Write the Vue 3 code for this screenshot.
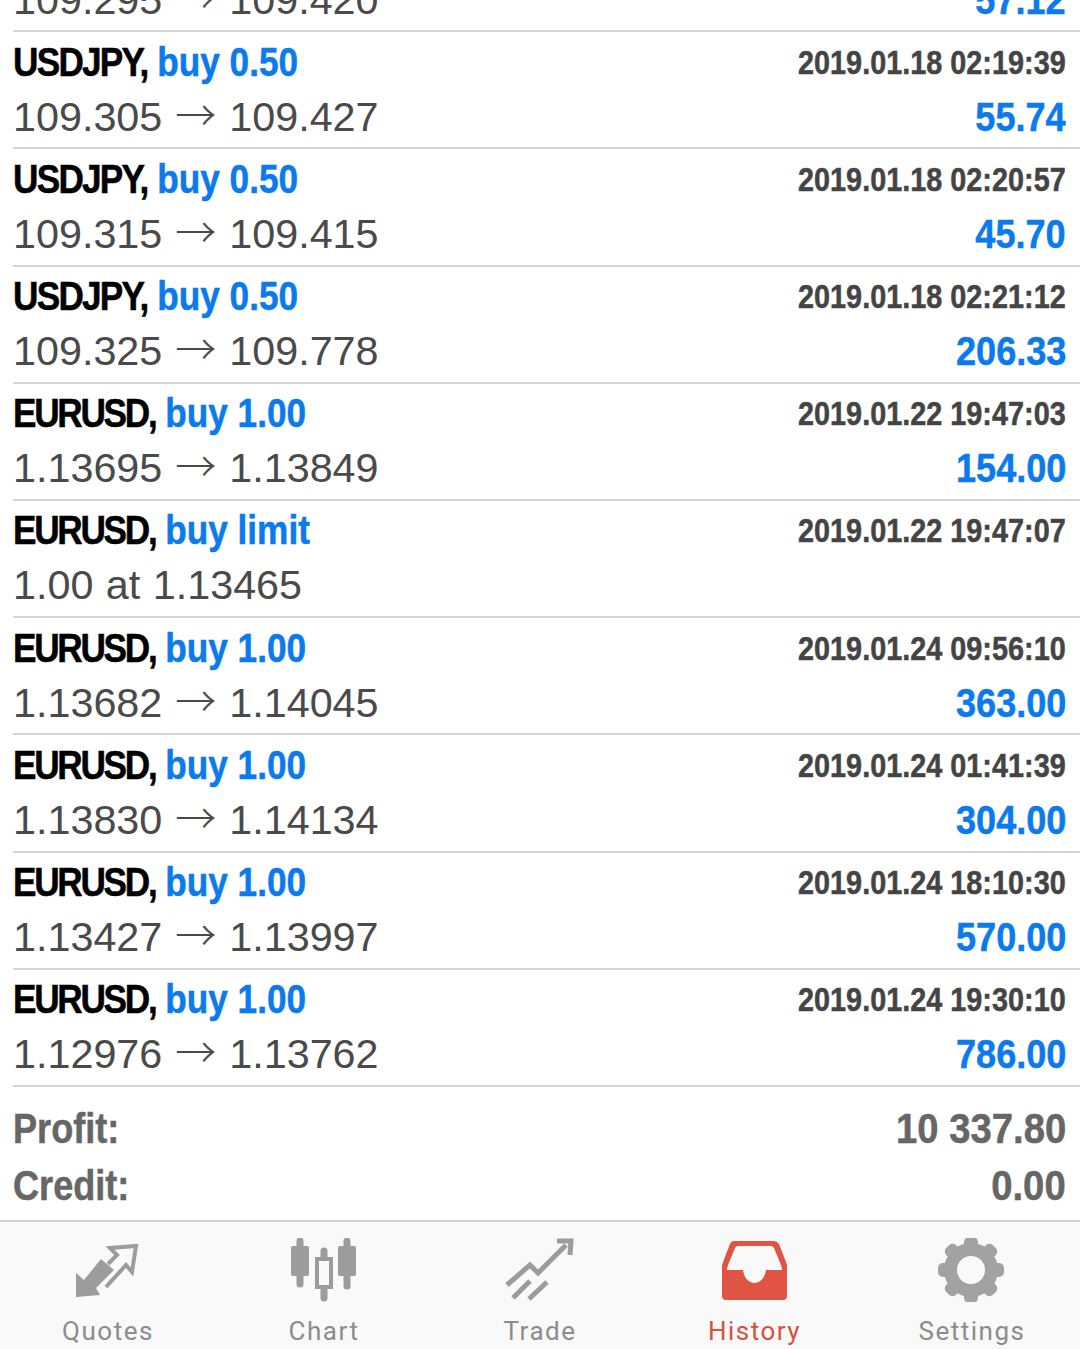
<script setup>
const deals = [
  { pair: 'USDJPY', type: 'buy 0.50', time: '2019.01.18 02:18:52', from: '109.295', to: '109.420', profit: '57.12' },
  { pair: 'USDJPY', type: 'buy 0.50', time: '2019.01.18 02:19:39', from: '109.305', to: '109.427', profit: '55.74' },
  { pair: 'USDJPY', type: 'buy 0.50', time: '2019.01.18 02:20:57', from: '109.315', to: '109.415', profit: '45.70' },
  { pair: 'USDJPY', type: 'buy 0.50', time: '2019.01.18 02:21:12', from: '109.325', to: '109.778', profit: '206.33' },
  { pair: 'EURUSD', type: 'buy 1.00', time: '2019.01.22 19:47:03', from: '1.13695', to: '1.13849', profit: '154.00' },
  { pair: 'EURUSD', type: 'buy limit', time: '2019.01.22 19:47:07', order: '1.00 at 1.13465' },
  { pair: 'EURUSD', type: 'buy 1.00', time: '2019.01.24 09:56:10', from: '1.13682', to: '1.14045', profit: '363.00' },
  { pair: 'EURUSD', type: 'buy 1.00', time: '2019.01.24 01:41:39', from: '1.13830', to: '1.14134', profit: '304.00' },
  { pair: 'EURUSD', type: 'buy 1.00', time: '2019.01.24 18:10:30', from: '1.13427', to: '1.13997', profit: '570.00' },
  { pair: 'EURUSD', type: 'buy 1.00', time: '2019.01.24 19:30:10', from: '1.12976', to: '1.13762', profit: '786.00' },
]

const teeth = [0, 45, 90, 135, 180, 225, 270, 315]
</script>

<template>
  <div class="screen">
    <div class="content">
      <ul class="deal-list">
        <li v-for="deal in deals" :key="deal.time" class="deal">
          <div class="deal-line first">
            <span class="deal-title"><span class="deal-pair" :class="{ tight: deal.pair === 'EURUSD' }">{{ deal.pair }},</span> <span class="deal-type">{{ deal.type }}</span></span>
            <span class="deal-time">{{ deal.time }}</span>
          </div>
          <div class="deal-line">
            <span v-if="deal.order" class="deal-prices">{{ deal.order }}</span>
            <span v-else class="deal-prices">{{ deal.from }}<span class="arrow">→</span>{{ deal.to }}</span>
            <span class="deal-profit">{{ deal.profit }}</span>
          </div>
        </li>
      </ul>
      <div class="summary">
        <div class="summary-row"><span class="summary-label">Profit:</span><span class="summary-value">10 337.80</span></div>
        <div class="summary-row"><span class="summary-label">Credit:</span><span class="summary-value">0.00</span></div>
      </div>
    </div>

    <nav class="tabbar">
      <div class="tab">
        <svg class="tab-icon" width="80" height="64" viewBox="0 0 80 64">
          <polygon class="fill" points="8,59 8,35 16,42 33,21 46,32 28,50 32,57" />
          <path class="line thin" d="M38 49 58 27 64 34 68 8 42 10 49 17 40 26" />
        </svg>
        <span class="tab-label">Quotes</span>
      </div>
      <div class="tab">
        <svg class="tab-icon" width="80" height="64" viewBox="0 0 80 64">
          <path class="wick" d="M16 3V46M63 3V48M40 13V60" />
          <rect class="fill" x="7" y="8" width="18" height="30" rx="2" />
          <rect class="fill" x="54" y="8" width="18" height="30" rx="2" />
          <rect class="hollow" x="33" y="21" width="14" height="28" />
        </svg>
        <span class="tab-label">Chart</span>
      </div>
      <div class="tab">
        <svg class="tab-icon" width="80" height="64" viewBox="0 0 80 64">
          <path class="line" d="M7 47 30 27 38 35 66 7" />
          <path class="line" d="M57 3 71 3 70 17" />
          <path class="line" d="M13 60 30 43M29 61 47 44" />
        </svg>
        <span class="tab-label">Trade</span>
      </div>
      <div class="tab active">
        <svg class="tab-icon" width="80" height="64" viewBox="0 0 80 64">
          <path class="tray" fill-rule="evenodd" d="M18 3H58Q61 3 63 6L70 24Q71 26 71 30V58Q71 62 67 62H10Q6 62 6 58V30Q6 26 7 24L14 6Q15 3 18 3ZM22 8Q20 8 19 10L12 27Q11 30 11 32H27C28 40 33 45 38.500 45S49 40 50 32H66Q66 30 65 27L58 10Q57 8 55 8Z" />
        </svg>
        <span class="tab-label history-label">History</span>
      </div>
      <div class="tab">
        <svg class="tab-icon" width="80" height="64" viewBox="0 0 80 64">
          <circle class="gear-ring" cx="39" cy="32" r="20.500" />
          <rect
            v-for="angle in teeth"
            :key="angle"
            class="gear-tooth"
            x="32"
            y="-1"
            width="14"
            height="12"
            rx="5"
            :transform="`rotate(${angle} 39 32)`"
          />
        </svg>
        <span class="tab-label">Settings</span>
      </div>
    </nav>
  </div>
</template>

<style scoped>
.screen {
  width: 1080px;
  height: 1349px;
  overflow: hidden;
  display: flex;
  flex-direction: column;
  background: #fff;
  font-family: "Liberation Sans", Arial, sans-serif;
}

.content {
  flex: 1;
  min-height: 0;
  padding-left: 13px;
}

.deal-list {
  list-style: none;
  margin: -85px 0 0;
  padding: 0;
}

.deal {
  height: 117.200px;
  box-sizing: border-box;
  border-bottom: 2px solid #d4d4d4;
  padding: 1.500px 14px 0 0;
}

.deal-line {
  display: flex;
  justify-content: space-between;
  align-items: baseline;
  height: 56px;
  line-height: 56px;
}

.deal-line.first {
  height: 55px;
}

/* no condensed face is installed, so the bold text is narrowed by hand */
.deal-title,
.deal-time,
.deal-profit,
.summary-row {
  font-weight: 700;
  -webkit-text-stroke: 0.5px currentColor;
}

.deal-title {
  font-size: 40px;
  color: #000;
  transform: scaleX(0.88);
  transform-origin: left center;
}

.deal-pair {
  letter-spacing: -2px;
}

.deal-pair.tight {
  letter-spacing: -2.600px;
}

.deal-type {
  color: #0a7aee;
}

.deal-time {
  font-size: 34px;
  color: #444;
  position: relative;
  top: -2px;
  transform: scaleX(0.848);
  transform-origin: right center;
}

.deal-prices {
  font-size: 41.300px;
  word-spacing: 1px;
  color: #4a4a4a;
}

.arrow {
  margin: 0 13px;
  font-family: "Noto Sans CJK JP", sans-serif;
  font-size: 41px;
  font-weight: 300;
  line-height: 0;
}

.deal-profit {
  font-size: 41px;
  color: #0a7aee;
  transform: scaleX(0.88);
  transform-origin: right center;
}

.summary {
  padding: 13px 14px 0 0;
}

.summary-row {
  display: flex;
  justify-content: space-between;
  align-items: baseline;
  height: 57px;
  line-height: 57px;
  font-size: 43px;
  color: #666;
}

.summary-label {
  transform: scaleX(0.84);
  transform-origin: left center;
}

.summary-value {
  transform: scaleX(0.89);
  transform-origin: right center;
}

.tabbar {
  height: 129px;
  box-sizing: border-box;
  flex-shrink: 0;
  display: grid;
  grid-template-columns: repeat(5, 216px);
  background: #f9f9f9;
  border-top: 2px solid #d2d2d2;
}

.tab {
  display: flex;
  flex-direction: column;
  align-items: center;
  padding-top: 16px;
  color: #8c8c8c;
}

.tab.active {
  color: #d9503f;
}

.tab-icon {
  display: block;
  flex-shrink: 0;
}

.tab-label {
  margin-top: 14px;
  font-family: Roboto, sans-serif;
  font-size: 26px;
  line-height: 30px;
  letter-spacing: 1.500px;
}

.history-label {
  margin-left: -3px;
}

.fill {
  fill: #9c9c9c;
}

.line {
  fill: none;
  stroke: #9c9c9c;
  stroke-width: 5;
}

.line.thin {
  stroke-width: 4;
}

.wick {
  fill: none;
  stroke: #9c9c9c;
  stroke-width: 7;
  stroke-linecap: round;
}

.hollow {
  fill: #f9f9f9;
  stroke: #9c9c9c;
  stroke-width: 4;
}

.tray {
  fill: #e05443;
}

.gear-ring {
  fill: none;
  stroke: #a2a2a2;
  stroke-width: 13;
}

.gear-tooth {
  fill: #a2a2a2;
}
</style>

<style>
html,
body {
  margin: 0;
  background: #fff;
}
</style>
